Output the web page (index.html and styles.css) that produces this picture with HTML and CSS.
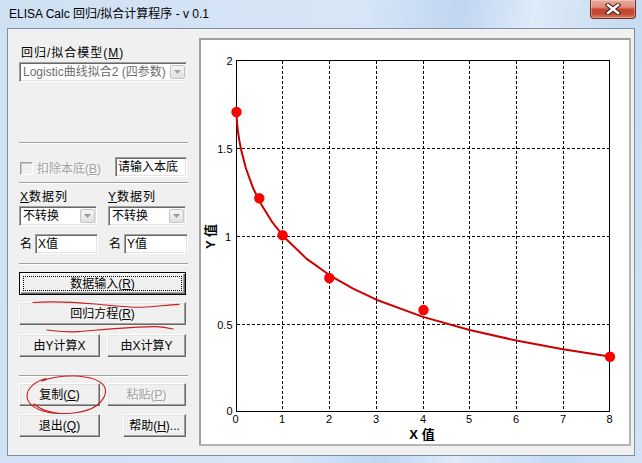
FILE: index.html
```html
<!DOCTYPE html>
<html lang="zh-CN">
<head>
<meta charset="utf-8">
<title>ELISA Calc</title>
<link rel="stylesheet" href="styles.css">
</head>
<body>
<div class="window">
  <div class="titlebar">
    <span class="title">ELISA Calc 回归/拟合计算程序 - v 0.1</span>
    <div class="close">
      <svg width="16" height="12" viewBox="0 0 16 12">
        <path d="M3 2 L13 10 M13 2 L3 10" stroke="#3f1a14" stroke-width="4.4" stroke-linecap="square"/>
        <path d="M3 2 L13 10 M13 2 L3 10" stroke="#ffffff" stroke-width="2.4" stroke-linecap="square"/>
      </svg>
    </div>
  </div>
  <div class="client">
    <div class="left">
      <div class="lbl lbl-model">回归/拟合模型(<u>M</u>)</div>
      <div class="combo combo-model disabled">
        <span class="val">Logistic曲线拟合2 (四参数)</span>
        <span class="drop"><svg width="7" height="4" viewBox="0 0 7 4"><path d="M0 0H7L3.5 4Z" fill="#a4a4a4"/></svg></span>
      </div>
      <div class="sep sep1"></div>
      <div class="row check-row">
        <span class="checkbox"></span>
        <span class="dis">扣除本底(<u>B</u>)</span>
        <div class="edit edit-base">请输入本底</div>
      </div>
      <div class="sep sep2"></div>
      <div class="row lbl-row">
        <span class="lbl col1"><u>X</u>数据列</span>
        <span class="lbl col2"><u>Y</u>数据列</span>
      </div>
      <div class="row combo-row">
        <div class="combo combo-small">
          <span class="val">不转换</span>
          <span class="drop"><svg width="7" height="4" viewBox="0 0 7 4"><path d="M0 0H7L3.5 4Z" fill="#9a9a9a"/></svg></span>
        </div>
        <div class="combo combo-small">
          <span class="val">不转换</span>
          <span class="drop"><svg width="7" height="4" viewBox="0 0 7 4"><path d="M0 0H7L3.5 4Z" fill="#9a9a9a"/></svg></span>
        </div>
      </div>
      <div class="row name-row">
        <div class="name-group g1"><span class="name">名</span><div class="edit edit-x">X值</div></div>
        <div class="name-group g2"><span class="name">名</span><div class="edit edit-y">Y值</div></div>
      </div>
      <div class="sep sep3"></div>
      <div class="btn btn-wide default btn-input"><span>数据输入(<u>R</u>)</span></div>
      <div class="btn btn-wide btn-eq"><span>回归方程(<u>R</u>)</span></div>
      <div class="row btn-row calc-row">
        <div class="btn btn-half">由Y计算X</div>
        <div class="btn btn-half2">由X计算Y</div>
      </div>
      <div class="sep sep4"></div>
      <div class="row btn-row copy-row">
        <div class="btn btn-half">复制(<u>C</u>)</div>
        <div class="btn btn-half2 btn-disabled">粘贴(<u>P</u>)</div>
      </div>
      <div class="row btn-row exit-row">
        <div class="btn btn-half">退出(<u>Q</u>)</div>
        <div class="btn btn-help">帮助(<u>H</u>)...</div>
      </div>
    </div>
    <div class="chart">
      <svg width="428" height="404" viewBox="201 40 428 404" class="plot">
        <rect x="201" y="40" width="428" height="404" fill="#ffffff"/>
        <g stroke="#000" stroke-width="1" stroke-dasharray="3 2" fill="none">
          <path d="M282.5 61V411M329.5 61V411M376.5 61V411M423.5 61V411M469.5 61V411M516.5 61V411M563.5 61V411"/>
          <path d="M237 148.5H609M237 236.5H609M237 324.5H609"/>
        </g>
        <rect x="236.5" y="60.5" width="373" height="351" fill="none" stroke="#000" stroke-width="1"/>
        <polyline fill="none" stroke="#cc0000" stroke-width="2" stroke-linejoin="round"
          points="236.5,113.2 237,122.1 237.9,130.9 239.3,140.4 241.2,150 245.8,168 252.8,187.3 259.8,202.1 271.5,221.1 283.1,236 306.4,258.6 329.75,275.3 353.1,288.7 376.4,299.7 423,316.9 469.6,330 516.25,340.55 562.9,349.2 609.5,356.6"/>
        <g fill="#ff0000">
          <circle cx="236.5" cy="112" r="5.2"/>
          <circle cx="259.3" cy="198.3" r="5.2"/>
          <circle cx="282.6" cy="235.3" r="5.2"/>
          <circle cx="329.3" cy="278" r="5.2"/>
          <circle cx="423.5" cy="310" r="5.2"/>
          <circle cx="610" cy="356.7" r="5.2"/>
        </g>
        <g font-family="Liberation Sans, Arial, sans-serif" font-size="11" fill="#000" text-anchor="end">
          <text x="232.5" y="65">2</text>
          <text x="232.5" y="152.5">1.5</text>
          <text x="231" y="240.5">1</text>
          <text x="232.5" y="328.5">0.5</text>
          <text x="232.5" y="415">0</text>
        </g>
        <g font-family="Liberation Sans, Arial, sans-serif" font-size="11" fill="#000" text-anchor="middle">
          <text x="235.5" y="423">0</text>
          <text x="282" y="423">1</text>
          <text x="329" y="423">2</text>
          <text x="376" y="423">3</text>
          <text x="423" y="423">4</text>
          <text x="469" y="423">5</text>
          <text x="516" y="423">6</text>
          <text x="563" y="423">7</text>
          <text x="609.5" y="423">8</text>
        </g>
        <g font-family="Liberation Sans, Noto Sans CJK SC, sans-serif" font-size="13" font-weight="bold" fill="#000" text-anchor="middle">
          <text x="422" y="439">X 值</text>
          <text x="210" y="241" transform="rotate(-90 210 236.5)">Y 值</text>
        </g>
      </svg>
    </div>
  </div>
  <svg class="annot" width="642" height="463" viewBox="0 0 642 463">
    <g fill="none" stroke="#cc1b1b" stroke-width="1.1" stroke-linecap="round">
      <path d="M33 302.5 C 50 301.2, 72 302, 95 304 S 128 307.6, 142 307.2 S 164 305.2, 179 304.4"/>
      <path d="M47 330 C 57 331, 64 332.6, 78 331.6 S 110 328.6, 130 327.6 S 158 325.4, 173 329"/>
      <path d="M46 378.5 C 36 381, 27 388, 27 396 C 27 405, 38 411, 52 413 C 66 414.5, 86 413, 96 406 C 104 400, 108 392, 104 386 C 100 380, 88 376.5, 74 376 C 62 375.8, 52 377, 42 381"/>
      <path d="M34 404 Q 42 411.5, 60 413.5"/>
    </g>
  </svg>
</div>
</body>
</html>
```

FILE: styles.css
```css
html, body {
  margin: 0;
  padding: 0;
}

body {
  width: 642px;
  height: 463px;
  overflow: hidden;
  font-family: "Liberation Sans", "Noto Sans CJK SC", sans-serif;
  font-size: 12px;
  color: #000;
}

u {
  text-decoration: underline;
  text-underline-offset: 1px;
}

.window {
  position: relative;
  width: 642px;
  height: 463px;
  display: flex;
  flex-direction: column;
  background: linear-gradient(100deg, #cfe0f3 0%, #d7e6f7 50%, #c0d7f0 64%, #deebf9 74%, #c6dbf1 88%, #d3e3f5 100%);
}

.titlebar {
  height: 28px;
  flex: none;
  display: flex;
  align-items: flex-start;
}

.title {
  margin: 7px 0 0 9px;
  line-height: 14px;
  white-space: nowrap;
}

.close {
  margin-left: auto;
  margin-right: 6px;
  width: 46px;
  height: 19px;
  box-sizing: border-box;
  border: 1px solid #6e2c22;
  border-top: none;
  border-radius: 0 0 4px 4px;
  background: linear-gradient(#e8aa9d 0%, #dc8c79 40%, #c6462f 52%, #c24a33 75%, #d67a5c 100%);
  box-shadow: inset 0 0 0 1px rgba(255, 255, 255, 0.3);
  display: flex;
  align-items: center;
  justify-content: center;
}

.close svg {
  display: block;
}

.client {
  flex: 1;
  min-height: 0;
  margin: 0 7px 7px 7px;
  border: 1px solid #7d8ea3;
  background: #f0f0f0;
  display: flex;
}

.left {
  flex: none;
  width: 191px;
  padding-left: 11px;
  box-sizing: border-box;
  display: flex;
  flex-direction: column;
}

.row {
  display: flex;
  align-items: center;
}

.lbl {
  height: 14px;
  line-height: 14px;
  white-space: nowrap;
}

.lbl-model {
  margin-top: 17px;
  padding-left: 2px;
  letter-spacing: 1px;
}

/* sunken fields */
.combo,
.edit {
  box-sizing: border-box;
  height: 20px;
  background: #fff;
  border: 1px solid;
  border-color: #a0a0a0 #ffffff #ffffff #a0a0a0;
  box-shadow: inset 1px 1px 0 #696969, inset -1px -1px 0 #e3e3e3;
  display: flex;
  align-items: center;
  line-height: 14px;
  white-space: nowrap;
  overflow: hidden;
}

.combo .val {
  flex: 1;
  padding-left: 3px;
  overflow: hidden;
}

.combo .drop {
  flex: none;
  width: 15px;
  height: 14px;
  margin-right: 1px;
  box-sizing: border-box;
  border: 1px solid #c4c4c4;
  border-radius: 2px;
  background: linear-gradient(#f6f6f6, #e0e0e0);
  display: flex;
  align-items: center;
  justify-content: center;
}

.combo .drop svg {
  display: block;
}

.combo-model {
  margin-top: 2px;
  width: 168px;
}

.combo.disabled .val {
  color: #6d6d6d;
}

.sep {
  width: 169px;
  height: 0;
  border-top: 1px solid #a0a0a0;
  border-bottom: 1px solid #ffffff;
}

.sep1 { margin-top: 60px; }
.sep2 { margin-top: 5px; }
.sep3 { margin-top: 9px; }
.sep4 { margin-top: 18px; }

.check-row {
  margin-top: 13px;
  height: 20px;
  width: 168px;
}

.checkbox {
  flex: none;
  width: 13px;
  height: 13px;
  margin-left: 1px;
  margin-top: 2px;
  box-sizing: border-box;
  border: 1px solid;
  border-color: #a0a0a0 #ffffff #ffffff #a0a0a0;
  box-shadow: inset 1px 1px 0 #c8c8c8;
  background: #f0f0f0;
}

.dis {
  margin-left: 4px;
  color: #a0a0a0;
  text-shadow: 1px 1px 0 #ffffff;
  white-space: nowrap;
}

.edit {
  padding-left: 2px;
}

.edit-base {
  margin-left: auto;
  width: 72px;
}

.lbl-row {
  margin-top: 6px;
  height: 14px;
}

.lbl-row .col1 {
  width: 88px;
  padding-left: 1px;
  letter-spacing: 1px;
}

.lbl-row .col2 {
  letter-spacing: 1px;
}

.combo-row {
  margin-top: 2px;
  gap: 11px;
}

.combo-small {
  width: 78px;
}

.name-row {
  margin-top: 8px;
  height: 20px;
}

.name-group {
  display: flex;
  align-items: center;
}

.name-group.g1 {
  width: 89px;
}

.name {
  margin-left: 1px;
  margin-right: 3px;
  line-height: 14px;
}

.edit-x {
  width: 63px;
}

.edit-y {
  width: 64px;
}

/* buttons */
.btn {
  box-sizing: border-box;
  height: 23px;
  flex: none;
  background: #f0f0f0;
  border: 1px solid;
  border-color: #ffffff #696969 #696969 #ffffff;
  box-shadow: inset -1px -1px 0 #a0a0a0, inset 1px 1px 0 #e3e3e3;
  display: flex;
  align-items: center;
  justify-content: center;
  line-height: 14px;
  white-space: nowrap;
}

.btn-wide {
  width: 167px;
}

.btn.default {
  position: relative;
  border-color: #000000;
  box-shadow: inset 1px 1px 0 #ffffff, inset -1px -1px 0 #696969, inset -2px -2px 0 #a0a0a0;
}

.btn.default::after {
  content: "";
  position: absolute;
  left: 3px;
  top: 3px;
  right: 3px;
  bottom: 3px;
  border: 1px dotted #000;
}

.btn-input {
  margin-top: 7px;
}

.btn-eq {
  margin-top: 7px;
}

.btn-row {
  height: 23px;
  width: 167px;
}

.calc-row { margin-top: 9px; }
.copy-row { margin-top: 6px; }
.exit-row { margin-top: 8px; }

.btn-half {
  width: 81px;
}

.btn-half2 {
  width: 79px;
  margin-left: auto;
}

.btn-help {
  width: 63px;
  margin-left: auto;
}

.btn-disabled {
  color: #a0a0a0;
  text-shadow: 1px 1px 0 #ffffff;
}

/* chart */
.chart {
  flex: none;
  margin-top: 9px;
  width: 432px;
  height: 408px;
  box-sizing: border-box;
  border: 2px solid;
  border-color: #a0a0a0 #b4b4b4 #b4b4b4 #a0a0a0;
  background: #fff;
}

.chart .plot {
  display: block;
}

/* hand drawn red annotations over the screenshot */
.annot {
  position: absolute;
  left: 0;
  top: 0;
  pointer-events: none;
}
```
